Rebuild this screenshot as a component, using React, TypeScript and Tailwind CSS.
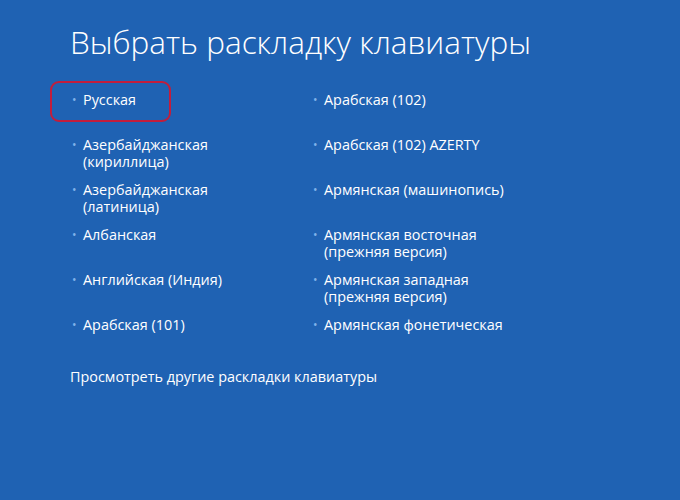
const left = [
  ['Русская'],
  ['Азербайджанская', '(кириллица)'],
  ['Азербайджанская', '(латиница)'],
  ['Албанская'],
  ['Английская (Индия)'],
  ['Арабская (101)'],
]

const right = [
  ['Арабская (102)'],
  ['Арабская (102) AZERTY'],
  ['Армянская (машинопись)'],
  ['Армянская восточная', '(прежняя версия)'],
  ['Армянская западная', '(прежняя версия)'],
  ['Армянская фонетическая'],
]

function Item({ lines }: { lines: string[] }) {
  return (
    <div className="flex h-[45px] items-start">
      <span className="w-[13px] pl-[2px] text-[12px] leading-[17px] text-[#7fb2ea]">•</span>
      <p className="text-[14.4px] leading-[17px] text-white">
        {lines[0]}
        {lines[1] && (
          <>
            <br />
            {lines[1]}
          </>
        )}
      </p>
    </div>
  )
}

export default function App() {
  return (
    <div
      className="relative h-[500px] w-[680px] overflow-hidden bg-[#1f62b3] pl-[70px] pt-[22px]"
      style={{ fontFamily: '"Open Sans", "Noto Sans", sans-serif' }}
    >
      <h1 className="text-[31.5px] font-light leading-[40px] text-white">Выбрать раскладку клавиатуры</h1>

      <div className="mt-[29px] grid grid-cols-[241px_1fr]">
        <div className="flex flex-col">
          {left.map((l) => (
            <Item key={l.join()} lines={l} />
          ))}
        </div>
        <div className="flex flex-col">
          {right.map((l) => (
            <Item key={l.join()} lines={l} />
          ))}
        </div>
      </div>

      <p className="mt-[7px] text-[14.4px] leading-[17px] text-white">Просмотреть другие раскладки клавиатуры</p>

      <div className="absolute left-[50px] top-[81px] h-[41px] w-[121px] rounded-[9px] border-2 border-[#c21d3c]" />
    </div>
  )
}
